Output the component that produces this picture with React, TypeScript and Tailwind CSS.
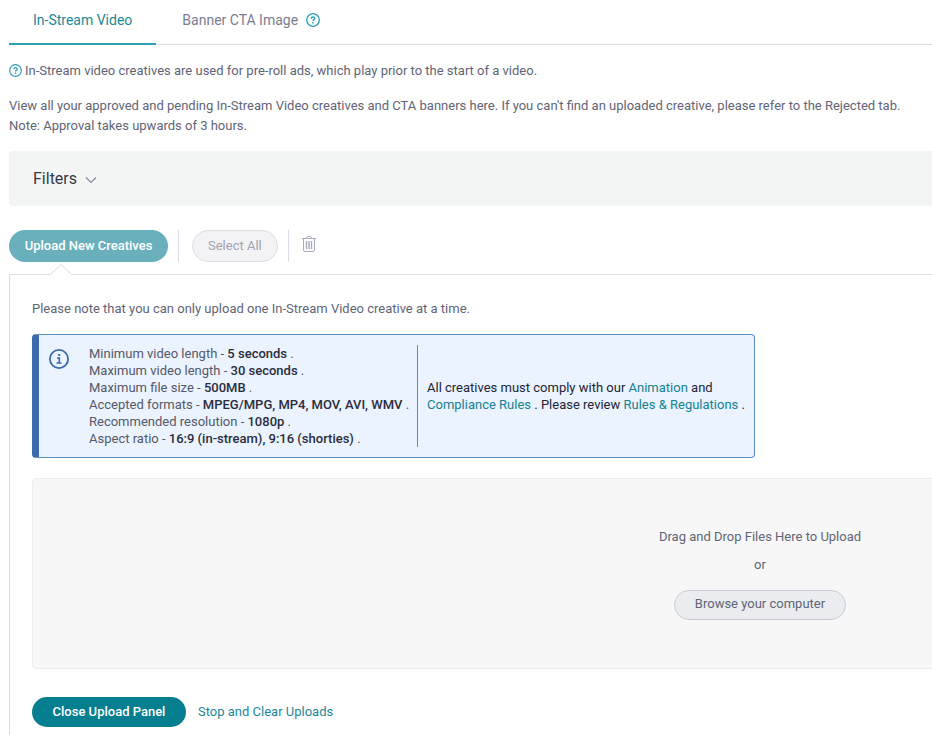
function HelpIcon({ size }: { size: number }) {
  return (
    <svg width={size} height={size} viewBox="0 0 14 14" fill="none" stroke="#2aa0b4" aria-hidden="true" className="shrink-0">
      <circle cx="7" cy="7" r="6.3" strokeWidth="1.3" />
      <path d="M5.2 5.700C5.2 4.600 6 4 7 4s1.800.6 1.800 1.500C8.800 6.700 7 6.600 7 8" strokeWidth="1.4" />
      <path d="M7 9v1.500" strokeWidth="1.5" />
    </svg>
  );
}

function InfoIcon() {
  return (
    <svg width="20" height="20" viewBox="0 0 20 20" fill="none" stroke="#3b6ba8" aria-hidden="true">
      <circle cx="10" cy="10" r="9.1" strokeWidth="1.8" />
      <path d="M8 9h2.300v5M7.500 14h5" strokeWidth="1.6" />
      <path d="M9.200 6h2" strokeWidth="2" />
    </svg>
  );
}

function TrashIcon() {
  return (
    <svg width="14" height="16" viewBox="0 0 14 16" fill="none" stroke="#a9abbf" aria-hidden="true">
      <path d="M0 2.500h14" />
      <path d="M4.500 2.500V1.500q0-1 1-1h3q1 0 1 1v1" />
      <path d="M1.500 2.500V14q0 1.500 1.500 1.500h8q1.500 0 1.500-1.500V2.500" />
      <path d="M4.500 5v8M7 5v8M9.500 5v8" strokeWidth="1.400" />
    </svg>
  );
}

const specs = [
  ["Minimum video length", "5 seconds"],
  ["Maximum video length", "30 seconds"],
  ["Maximum file size", "500MB"],
  ["Accepted formats", "MPEG/MPG, MP4, MOV, AVI, WMV"],
  ["Recommended resolution", "1080p"],
  ["Aspect ratio", "16:9 (in-stream), 9:16 (shorties)"],
];

export default function App() {
  return (
    <div className="overflow-hidden bg-white font-['Roboto',sans-serif] text-[13px] leading-5 text-[#626476]">
      <main className="min-w-[1520px] pl-[9px]">
        <nav className="flex h-[45px] border-b border-[#dcdee3] text-sm">
          <a href="#video" aria-current="page" className="-mb-px flex h-[45px] items-center border-b-2 border-[#2aa0b4] px-6 pb-1 text-[#1d8896]">
            In-Stream Video
          </a>
          <a href="#banner" className="flex items-center gap-2 px-[26px] pb-1 text-[#7a7c90]">
            Banner CTA Image
            <HelpIcon size={14} />
          </a>
        </nav>

        <p className="mt-4 flex items-center gap-[3px]">
          <span className="pb-0.5">
            <HelpIcon size={13} />
          </span>
          In-Stream video creatives are used for pre-roll ads, which play prior to the start of a video.
        </p>
        <p className="mt-[15px]">
          View all your approved and pending In-Stream Video creatives and CTA banners here. If you can't find an uploaded creative, please refer to the Rejected tab.
          <br />
          Note: Approval takes upwards of 3 hours.
        </p>

        <button type="button" className="mt-[15px] flex h-[55px] w-full items-center gap-2 rounded bg-[#f3f5f5] px-6 text-base text-[#373948]">
          Filters
          <svg width="12" height="8" viewBox="0 0 12 8" fill="none" stroke="#85879b" strokeWidth="1.200" aria-hidden="true" className="mt-0.5">
            <path d="M1 1.500l5 5 5-5" />
          </svg>
        </button>

        <div className="mt-6 flex h-8 items-center">
          <button type="button" className="h-8 w-[159px] rounded-full bg-[#69b0bc] font-medium text-white">
            Upload New Creatives
          </button>
          <span className="ml-2.5 h-8 w-px bg-[#dcdde6]" />
          <button type="button" disabled className="ml-[13px] h-8 rounded-full border border-[#dedfe5] bg-[#f3f3f6] px-[15px] text-[#a2a3b0]">
            Select All
          </button>
          <span className="ml-2.5 h-8 w-px bg-[#dcdde6]" />
          <button type="button" aria-label="Delete" className="ml-[13px] pb-1">
            <TrashIcon />
          </button>
        </div>

        <section className="relative mt-3 border border-[#dcdde3] px-[22px] pt-6 pb-5">
          <svg width="22" height="12" viewBox="0 0 22 12" aria-hidden="true" className="absolute -top-[11px] left-10">
            <path d="M0.500 10.500L11 0.500l10.500 10V12H0.500z" fill="#fff" />
            <path d="M0.500 10.500L11 0.500l10.500 10" fill="none" stroke="#dcdde3" />
          </svg>
          <p>Please note that you can only upload one In-Stream Video creative at a time.</p>

          <div className="mt-[15px] flex w-[723px] rounded border border-l-[7px] border-[#5a8bc9] border-l-[#3b6ba8] bg-[#eaf3ff] py-2.5 leading-[17px]">
            <div className="w-[50px] pt-1 pl-2.5">
              <InfoIcon />
            </div>
            <ul className="w-[328px] text-[#555868]">
              {specs.map(([name, value]) => (
                <li key={name}>
                  {name} - <strong className="font-medium text-[#2b2d3c]">{value}</strong> .
                </li>
              ))}
            </ul>
            <div className="flex items-center border-l border-[#5a8bc9] pl-[9px] text-[#222433]">
              <p>
                All creatives must comply with our <a href="#animation" className="text-[#14818f]">Animation</a> and
                <br />
                <a href="#compliance" className="text-[#14818f]">Compliance Rules</a> . Please review{" "}
                <a href="#rules" className="text-[#14818f]">Rules &amp; Regulations</a> .
              </p>
            </div>
          </div>

          <div className="mt-5 flex w-[1456px] flex-col items-center rounded border border-[#ececee] bg-[#f7f7f7] pt-12 pb-12">
            <p>Drag and Drop Files Here to Upload</p>
            <p className="mt-2">or</p>
            <button type="button" className="mt-[15px] h-[30px] rounded-full border border-[#c9cad6] bg-[#ebecf0] px-5 pb-0.5">
              Browse your computer
            </button>
          </div>

          <div className="mt-7 flex items-center gap-3">
            <button type="button" className="h-[30px] w-[154px] rounded-full bg-[#057e8f] font-medium text-white">
              Close Upload Panel
            </button>
            <a href="#stop" className="text-[#1d8896]">Stop and Clear Uploads</a>
          </div>
        </section>
      </main>
    </div>
  );
}
